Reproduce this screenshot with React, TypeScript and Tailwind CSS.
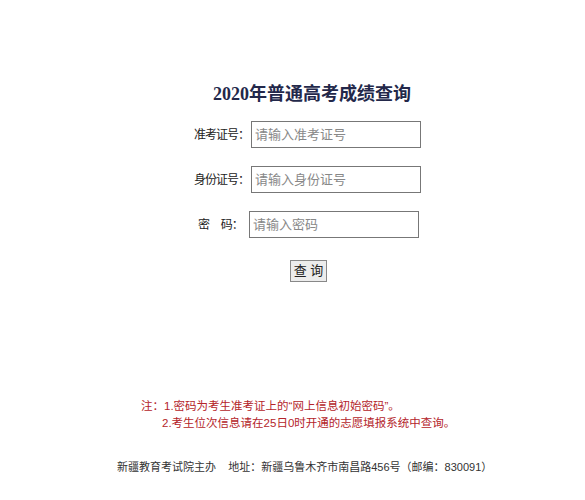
export default function App() {
  const font = { fontFamily: '"Liberation Sans", "Noto Sans CJK SC", sans-serif' };
  const inputCls =
    "w-[170px] h-[27px] border border-[#777] px-[3px] text-[13px] outline-none placeholder:text-[#888]";
  return (
    <div className="w-[585px] h-[500px] bg-white flex flex-col text-[#222]" style={font}>
      <h1
        className="mt-[83px] ml-[213px] text-[18px] leading-[22px] font-bold text-[#23284a]"
        style={{ fontFamily: '"Liberation Serif", "Noto Sans CJK SC", serif' }}
      >
        2020年普通高考成绩查询
      </h1>

      <div className="mt-[16px] flex flex-col gap-[18px]">
        <div className="flex items-center ml-[194px]">
          <span className="w-[57px] text-[12px] tracking-[-1px] whitespace-nowrap">准考证号：</span>
          <input className={inputCls} placeholder="请输入准考证号" />
        </div>
        <div className="flex items-center ml-[194px]">
          <span className="w-[57px] text-[12px] tracking-[-1px] whitespace-nowrap">身份证号：</span>
          <input className={inputCls} placeholder="请输入身份证号" />
        </div>
        <div className="flex items-center ml-[198px]">
          <span className="w-[51px] text-[12px] tracking-[-1px] whitespace-pre">密     码：</span>
          <input className={inputCls} placeholder="请输入密码" />
        </div>
      </div>

      <div className="mt-[20px] ml-[290px]">
        <button className="w-[37px] h-[22px] border border-[#888] bg-[#ececec] text-[13px] leading-none whitespace-nowrap">
          查 询
        </button>
      </div>

      <div className="mt-[116px] ml-[141px] text-[11.5px] leading-[17px] text-[#b4242a]">
        <p>注：1.密码为考生准考证上的“网上信息初始密码”。</p>
        <p className="ml-[21px]">2.考生位次信息请在25日0时开通的志愿填报系统中查询。</p>
      </div>

      <p className="mt-[27px] ml-[117px] text-[11px] leading-[17px] text-[#333] whitespace-nowrap">
        新疆教育考试院主办&nbsp;&nbsp;&nbsp;&nbsp;地址：新疆乌鲁木齐市南昌路456号（邮编：830091）
      </p>
    </div>
  );
}
